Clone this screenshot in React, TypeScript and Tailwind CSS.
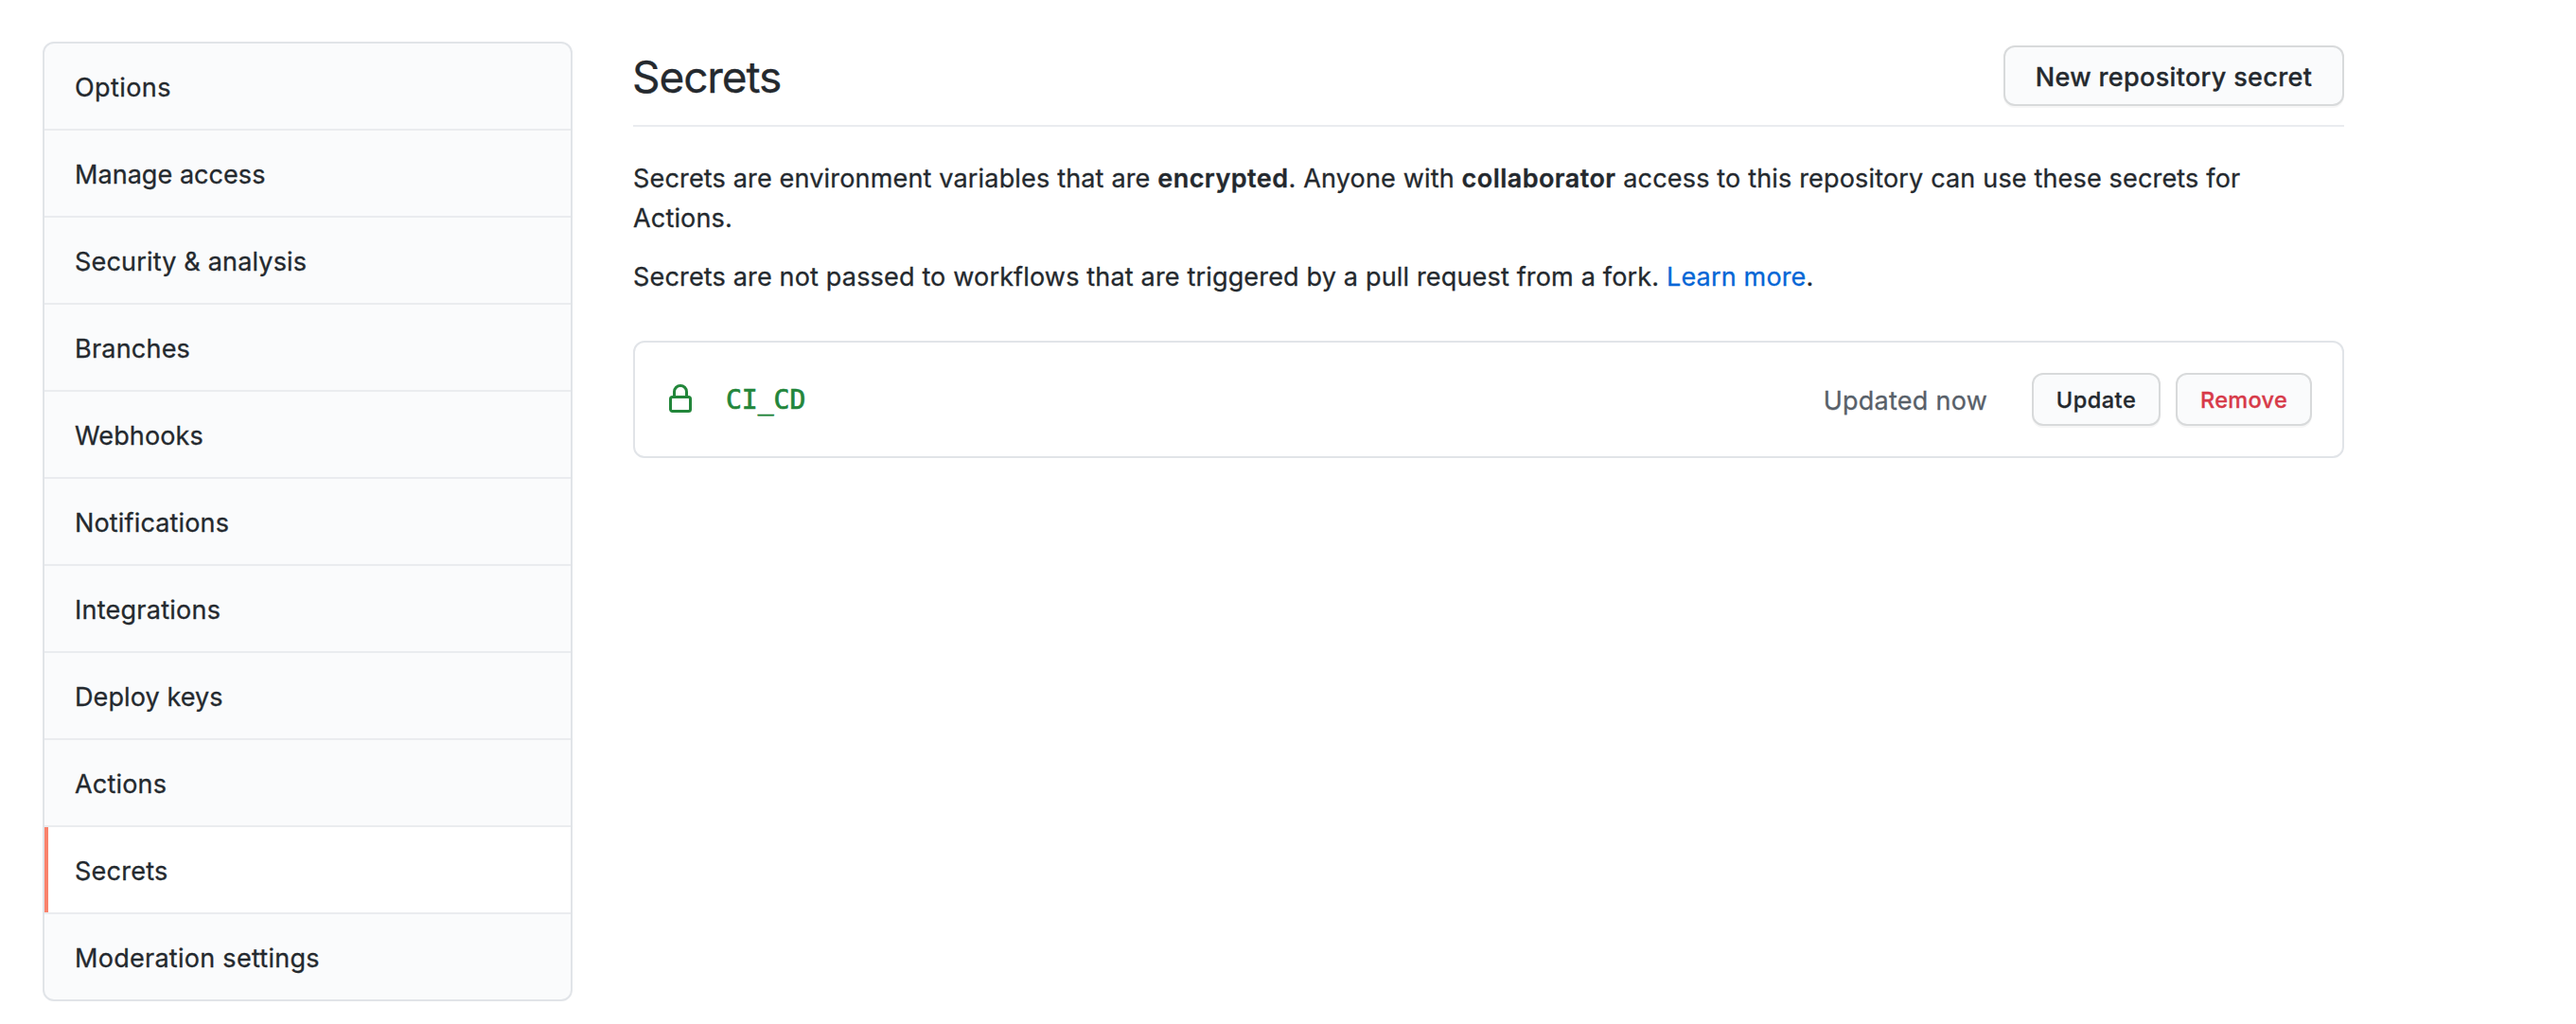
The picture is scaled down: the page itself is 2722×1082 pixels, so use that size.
const navItems = [
  { label: 'Options', tracking: 'tracking-[0.42px]' },
  { label: 'Manage access', tracking: 'tracking-[0.05px]' },
  { label: 'Security & analysis', tracking: 'tracking-[0.18px]' },
  { label: 'Branches', tracking: 'tracking-[0.22px]' },
  { label: 'Webhooks', tracking: 'tracking-[0.12px]' },
  { label: 'Notifications', tracking: 'tracking-[0.16px]' },
  { label: 'Integrations', tracking: 'tracking-[0.25px]' },
  { label: 'Deploy keys', tracking: 'tracking-[0.1px]' },
  { label: 'Actions', tracking: 'tracking-[0.18px]' },
  { label: 'Secrets', tracking: 'tracking-[0.25px]', selected: true },
  { label: 'Moderation settings', tracking: 'tracking-[0.28px]' },
];

const buttonBase =
  'flex items-center justify-center rounded-xl border-2 border-[#1b1f23]/15 bg-[#fafbfc] font-medium whitespace-nowrap shadow-[0_2px_0_rgba(27,31,35,0.04)]';

function LockIcon() {
  return (
    <svg viewBox="0 0 16 16" className="size-8 shrink-0 fill-[#22863a]" aria-hidden="true">
      <path
        fillRule="evenodd"
        d="M4 4v2h-.25A1.75 1.75 0 002 7.75v5.5c0 .966.784 1.75 1.75 1.75h8.5A1.75 1.75 0 0014 13.25v-5.5A1.75 1.75 0 0012.25 6H12V4a4 4 0 10-8 0zm6.5 2V4a2.5 2.5 0 10-5 0v2h5zM12 7.5h.25a.25.25 0 01.25.25v5.5a.25.25 0 01-.25.25h-8.5a.25.25 0 01-.25-.25v-5.5a.25.25 0 01.25-.25H12z"
      />
    </svg>
  );
}

function SettingsNav() {
  return (
    <nav className="w-[560px] shrink-0 divide-y-2 divide-[#eaecef] overflow-hidden rounded-xl border-2 border-[#e1e4e8] bg-[#fafbfc]">
      {navItems.map((item) => (
        <a
          key={item.label}
          href="#"
          className={`box-content flex h-[90px] items-center ${item.selected ? 'bg-white' : ''}`}
        >
          <span className={`h-full w-1 ${item.selected ? 'bg-[#f9826c]' : ''}`} />
          <span className={`pt-[3px] pl-7 ${item.tracking}`}>{item.label}</span>
        </a>
      ))}
    </nav>
  );
}

export default function App() {
  return (
    <div className="flex min-h-[1082px] w-[2722px] items-start gap-16 bg-white pt-11 pl-[45px] font-['Inter',sans-serif] text-[27px] leading-[42px] tracking-[0.17px] text-[#24292e] [-webkit-text-stroke:0.3px_currentColor]">
      <SettingsNav />
      <main className="w-[1808px] shrink-0 pt-1">
        <header className="flex items-start justify-between border-b-2 border-[#eaecef] pb-[18px]">
          <h1 className="-ml-px text-[46px] leading-[66px] tracking-[-1.1px]">Secrets</h1>
          <button className={`${buttonBase} h-16 w-[360px] pt-[3px] text-[27px] tracking-[0.34px]`}>
            New repository secret
          </button>
        </header>

        <p className="mt-[34px]">
          Secrets are environment variables that are{' '}
          <strong className="font-semibold tracking-[0.45px]">encrypted</strong>. Anyone with{' '}
          <strong className="font-semibold tracking-[0.45px]">collaborator</strong> access to this
          repository can use these secrets for
          <br />
          Actions.
        </p>
        <p className="mt-5">
          Secrets are not passed to workflows that are triggered by a pull request from a fork.{' '}
          <a href="#" className="text-[#0366d6]">Learn more</a>.
        </p>

        <section className="mt-[46px] flex h-[124px] items-center rounded-xl border-2 border-[#e1e4e8] px-8">
          <LockIcon />
          <code className="ml-8 pt-0.5 font-['DejaVu_Sans_Mono',monospace] text-[28px] tracking-normal text-[#22863a] [-webkit-text-stroke:0.7px_currentColor]">
            CI_CD
          </code>
          <span className="mr-[47px] ml-auto pt-[3px] tracking-[0.26px] text-[#586069]">Updated now</span>
          <button className={`${buttonBase} h-14 w-[136px] pt-0.5 text-[23.5px] tracking-[0.5px]`}>Update</button>
          <button className={`${buttonBase} ml-4 h-14 w-36 pt-0.5 text-[23.5px] tracking-[0.3px] text-[#d73a49]`}>
            Remove
          </button>
        </section>
      </main>
    </div>
  );
}
